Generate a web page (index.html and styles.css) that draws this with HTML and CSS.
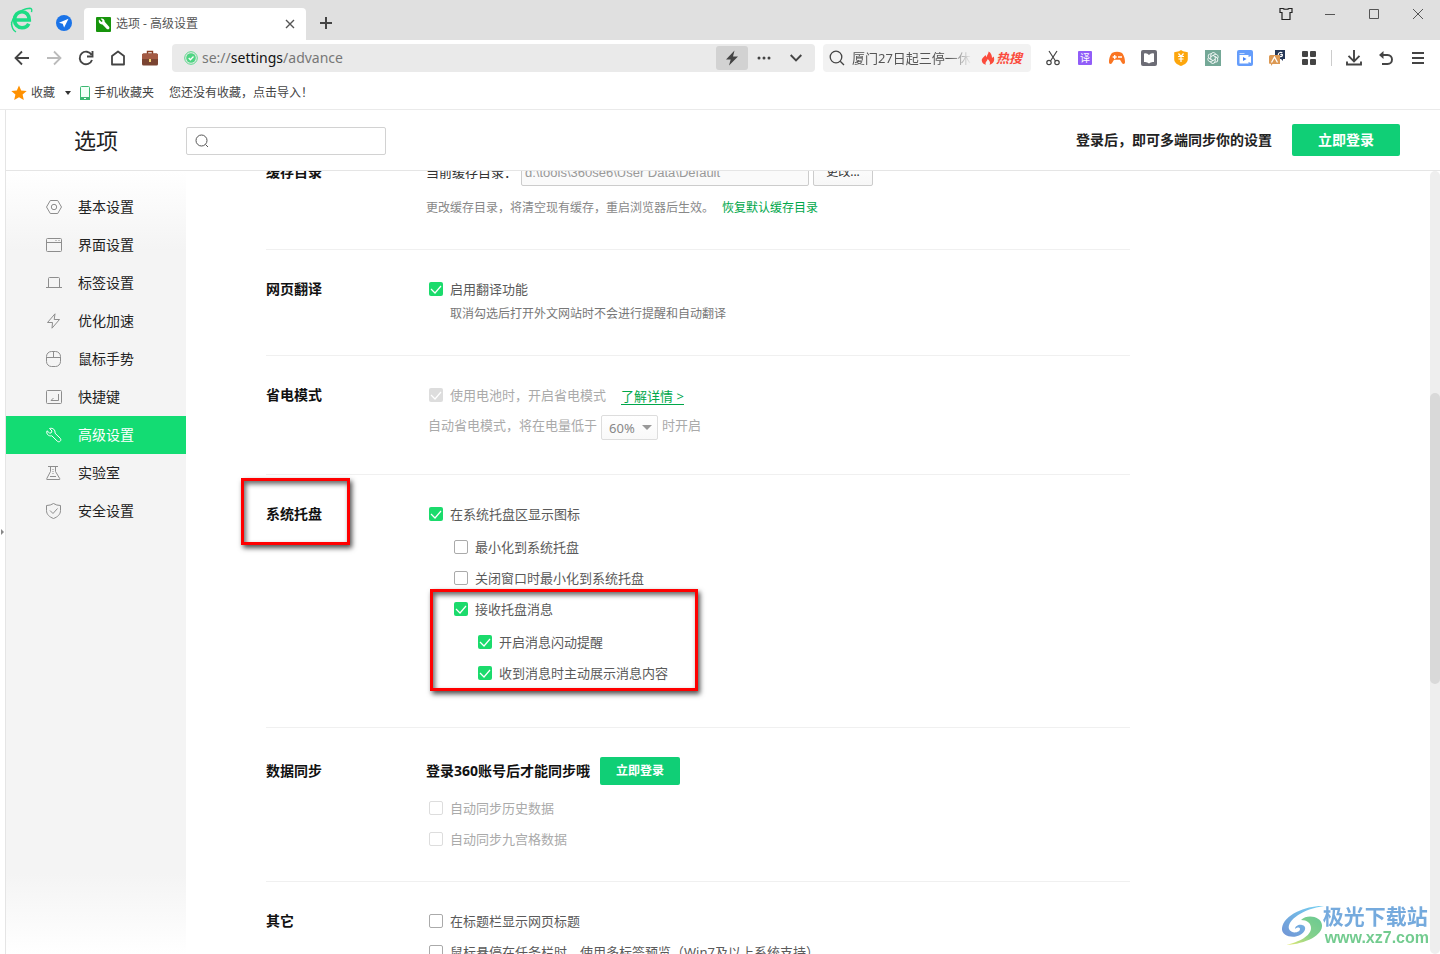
FILE: index.html
```html
<!DOCTYPE html>
<html lang="zh-CN">
<head>
<meta charset="utf-8">
<title>选项 - 高级设置</title>
<link rel="stylesheet" href="styles.css">
</head>
<body>
<div class="titlebar">
  <div class="brand">
    <svg width="24" height="26" viewBox="0 0 24 26" fill="none" stroke="#1ddc85"><path d="M5.500 13h13.800c0-5-3-8.300-7.300-8.300-4.300 0-7.500 3.500-7.500 8 0 4.700 3.300 8 7.500 8 3.200 0 5.500-1.300 6.700-4" stroke-width="3.600"/><path d="M1.500 18C2 9 10 2 20 1.200c2 0 2 2 1.500 4M1.500 15c0 4 1 8 4.500 10" stroke-width="1.400"/></svg>
  </div>
  <button class="pinned" aria-label="导航"><svg width="16" height="16" viewBox="0 0 16 16"><circle cx="8" cy="8" r="8" fill="#1a73e8"/><path d="M12.500 3.700 3 7.700l3.700 1.100 1.400 3.800z" fill="#fff"/></svg></button>
  <div class="tab">
    <svg width="15" height="15" viewBox="0 0 15 15"><rect width="15" height="15" rx="1" fill="#17940c"/><path d="M3 2.500 5.500 5 6.700 4 4.700 1.800c2-.8 4.200.6 4 3l4.400 4.900c1.200 1.700-.8 3.400-2.300 2.200L6.500 7.400C4.200 7.700 2 5.500 3 2.500z" fill="#fff"/></svg>
    <span class="tab-title">选项 - 高级设置</span>
    <button class="tab-close" aria-label="关闭标签"><svg width="10" height="10" viewBox="0 0 10 10" stroke="#555" stroke-width="1.400"><path d="m1 1 8 8M9 1 1 9"/></svg></button>
  </div>
  <button class="new-tab" aria-label="新标签"><svg width="12" height="12" viewBox="0 0 12 12" stroke="#444" stroke-width="2"><path d="M6 0v12M0 6h12"/></svg></button>
  <div class="window-controls">
    <button aria-label="皮肤"><svg width="14" height="14" viewBox="0 0 14 14" fill="none" stroke="#222" stroke-width="1.200"><path d="M1 1.500h3c1 1 5 1 6 0h3v4h-2v7H3v-7H1z"/></svg></button>
    <button aria-label="最小化"><svg width="10" height="10" viewBox="0 0 10 10" stroke="#555"><path d="M0 5.500h10"/></svg></button>
    <button aria-label="最大化"><svg width="10" height="10" viewBox="0 0 10 10" fill="none" stroke="#555"><path d="M.5.500h9v9h-9z"/></svg></button>
    <button aria-label="关闭"><svg width="10" height="10" viewBox="0 0 10 10" stroke="#555"><path d="m0 0 10 10M10 0 0 10"/></svg></button>
  </div>
</div>

<div class="toolbar">
  <div class="icon-row">
    <button aria-label="后退"><svg width="16" height="16" viewBox="0 0 16 16" fill="none" stroke="#444" stroke-width="1.800"><path d="M15 8H2M8 1.500 1.500 8 8 14.500"/></svg></button>
    <button aria-label="前进"><svg width="16" height="16" viewBox="0 0 16 16" fill="none" stroke="#bbb" stroke-width="1.800"><path d="M1 8h13M8 1.500 14.500 8 8 14.500"/></svg></button>
    <button aria-label="刷新"><svg width="16" height="16" viewBox="0 0 16 16" fill="none" stroke="#444" stroke-width="1.900"><path d="M13.500 4.800A6.300 6.300 0 1 0 14 10M14.500 1v5.500H9"/></svg></button>
    <button aria-label="主页"><svg width="16" height="16" viewBox="0 0 16 16" fill="none" stroke="#444" stroke-width="1.800" stroke-linejoin="round"><path d="M2 14.500V6l6-4.500L14 6v8.500z"/></svg></button>
    <button aria-label="工具箱"><svg width="16" height="16" viewBox="0 0 16 16"><path d="M5.500 4V1.500h5V4" fill="none" stroke="#8a3d22" stroke-width="1.400"/><rect y="3.500" width="16" height="12" rx="1.500" fill="#7a4432"/><path d="M0 5a1.500 1.500 0 0 1 1.500-1.500h13A1.500 1.500 0 0 1 16 5v4H0z" fill="#a35a44"/><rect x="7" y="9" width="2" height="3" fill="#f6d97a"/></svg></button>
  </div>
  <div class="address">
    <svg width="14" height="14" viewBox="0 0 14 14"><circle cx="7" cy="7" r="6.300" fill="none" stroke="#5bd98b"/><circle cx="7" cy="7" r="4.800" fill="#4fd583"/><path d="m4.700 7 1.700 1.700L9.500 5.500" fill="none" stroke="#fff" stroke-width="1.300"/></svg>
    <div class="url">se://<b>settings</b>/advance</div>
    <button class="boost" aria-label="极速模式"><svg width="14" height="16" viewBox="0 0 14 16" fill="#444"><path d="M9.500.500 1 9.500h4.700L4 15.500 13 6.500H8z"/></svg></button>
    <button class="addr-btn" aria-label="更多"><svg width="14" height="4" viewBox="0 0 14 4" fill="#444"><circle cx="2" cy="2" r="1.500"/><circle cx="7" cy="2" r="1.500"/><circle cx="12" cy="2" r="1.500"/></svg></button>
    <button class="addr-btn" aria-label="展开"><svg width="12" height="8" viewBox="0 0 12 8" fill="none" stroke="#444" stroke-width="1.900"><path d="m.7 1 5.300 5.300L11.300 1"/></svg></button>
  </div>
  <div class="quick-search">
    <svg width="16" height="16" viewBox="0 0 16 16" fill="none" stroke="#444" stroke-width="1.300"><circle cx="7" cy="7" r="5.800"/><path d="m11.200 11.200 3.800 3.800"/></svg>
    <span class="query">厦门27日起三停一休</span>
    <svg width="14" height="14" viewBox="0 0 14 14" fill="#fb4b3c"><path d="M7.500.500c.5 2-2 3.500-1.700 5.800L4.300 4C3.500 6 .5 7 .8 9.800c.2 2.200 2 3.600 4.300 3.900C3.500 11.500 6 10.500 6.800 8c1.500 1.700 3.200 3.500 1.700 5.700 4.200-.8 5.500-4.500 4.200-8.200L11 7C11 4.500 10 1.500 7.500.500z"/></svg>
    <em>热搜</em>
  </div>
  <div class="icon-row">
    <button aria-label="截图"><svg width="14" height="16" viewBox="0 0 14 16" fill="none" stroke="#444" stroke-width="1.200"><path d="m3 1 6.500 10M11 1 4.500 11"/><circle cx="3" cy="12.500" r="2.200"/><circle cx="11" cy="12.500" r="2.200"/></svg></button>
    <button aria-label="翻译"><span class="translate">译</span></button>
    <button aria-label="游戏"><svg width="16" height="16" viewBox="0 0 16 16"><path d="M4 2.500c2-.9 6-.9 8 0C14.500 3.500 16 8 16 12c0 2.500-2.200 2.500-3.200.8L11 9.800H5l-1.800 3C2.200 14.500 0 14.500 0 12c0-4 1.500-8.500 4-9.500z" fill="#fa7522"/><path d="M3.700 7h4M5.700 5v4" stroke="#fff" stroke-width="1.300"/><circle cx="10" cy="7" r="1" fill="#fff"/><circle cx="12" cy="7" r="1" fill="#fff"/></svg></button>
    <button aria-label="小说"><svg width="16" height="16" viewBox="0 0 16 16"><rect width="16" height="16" rx="2" fill="#6c6c75"/><path d="M3 3.500q3-1 5 1.500 2-2.500 5-1.500v8.500q-3-.5-5 1.500-2-2-5-1.500z" fill="#fff"/></svg></button>
    <button aria-label="优惠"><svg width="16" height="16" viewBox="0 0 16 16"><path d="m8 0 2 1.200 4.800 1V9c0 4-3.300 5.500-6.800 7-3.500-1.500-6.800-3-6.800-7V2.200l4.800-1z" fill="#fda60c"/><path d="m5.500 3.500 2.500 3 2.500-3M5 6.500h6M5.500 9h5M8 6.500V12" fill="none" stroke="#fff" stroke-width="1.200"/></svg></button>
    <button aria-label="智能助手"><svg width="16" height="16" viewBox="0 0 16 16"><rect width="16" height="16" fill="#74a897"/><g fill="none" stroke="#fff" stroke-width=".9"><path id="petal" d="M5.800 6.700 9.300 4.700c2.700-1.500 5 1.600 3.200 3.700"/><use href="#petal" transform="rotate(60 8 8)"/><use href="#petal" transform="rotate(120 8 8)"/><use href="#petal" transform="rotate(180 8 8)"/><use href="#petal" transform="rotate(240 8 8)"/><use href="#petal" transform="rotate(300 8 8)"/></g></svg></button>
    <button aria-label="录屏"><svg width="16" height="16" viewBox="0 0 16 16"><rect width="16" height="16" rx="2" fill="#659dfb"/><path d="M2.500 5h9v2l2.500-1v7l-2.500-1v1.500h-9z" fill="#fff"/><path d="m6 7 3.500 2L6 11z" fill="#4785f5"/><path d="M2.500 3.500h5" stroke="#c4dbff"/></svg></button>
    <button aria-label="字典"><svg width="16" height="16" viewBox="0 0 16 16"><path d="M6 0h10v9h-2v2l-2-2H6z" fill="#253858"/><path d="M13.300 3.200c-1-1.300-4-1-4 1.300s3 2.500 4 1.300V4.600h-2" fill="none" stroke="#fff" stroke-width="1.200"/><path d="M1.500 5H10q1 0 1 1v8H3.500L2 16v-2L0 13.500V6.500Q0 5 1.500 5z" fill="#dc9954"/><path d="m2.500 12.500 3-5.500 3 5.500" fill="none" stroke="#fff" stroke-width="1.300"/></svg></button>
    <button aria-label="扩展"><svg width="14" height="14" viewBox="0 0 14 14" fill="#444"><rect width="6" height="6" rx="1"/><rect x="8" width="6" height="6" rx="1"/><rect y="8" width="6" height="6" rx="1"/><rect x="8" y="8" width="6" height="6" rx="1"/></svg></button>
    <span class="divider"></span>
    <button aria-label="下载"><svg width="16" height="16" viewBox="0 0 16 16" fill="none" stroke="#444" stroke-width="1.900"><path d="M8 0v11M2.500 5.800 8 11.300l5.500-5.500M1 11.500V14.500h14v-3"/></svg></button>
    <button aria-label="恢复"><svg width="16" height="16" viewBox="0 0 16 16" fill="none" stroke="#444" stroke-width="1.900"><path d="M2 5h7.500c6 0 6 9 0 9H4"/><path d="M5.500 1v8L1 5z" fill="#444" stroke="none"/></svg></button>
    <button aria-label="菜单"><svg width="12" height="12" viewBox="0 0 12 12" stroke="#444" stroke-width="2"><path d="M0 1h12M0 6h12M0 11h12"/></svg></button>
  </div>
</div>

<div class="bookmarks">
  <button class="mark fav"><svg width="16" height="16" viewBox="0 0 16 16"><path d="m8 .5 2.200 5 5.500.5-4.100 3.600 1.200 5.400L8 12.200 3.200 15l1.200-5.400L.3 6l5.500-.5z" fill="#ff9100"/></svg>收藏<i class="caret"></i></button>
  <button class="mark phone"><svg width="10" height="14" viewBox="0 0 10 14"><rect x=".5" y=".5" width="9" height="13" rx="1" fill="#f2fff7" stroke="#3cb872"/><path d="M0 11h10v3H0z" fill="#3cb872"/><path d="M4 12.500h2" stroke="#fff"/></svg>手机收藏夹</button>
  <button class="mark import">您还没有收藏，点击导入！</button>
</div>

<div class="viewport">
  <div class="gutter"><i></i></div>
  <div class="page">
    <header class="page-head">
      <h1>选项</h1>
      <label class="search-box">
        <svg width="14" height="14" viewBox="0 0 14 14" fill="none" stroke="#555"><circle cx="6.500" cy="6.500" r="5.500"/><path d="m10.500 10.500 2.500 2.500"/></svg>
        <input type="text" aria-label="搜索设置">
      </label>
      <p>登录后，即可多端同步你的设置</p>
      <button class="login">立即登录</button>
    </header>
    <div class="page-body">
      <nav class="sidebar">
        <a href="#basic"><svg width="16" height="16" viewBox="0 0 16 16"><path d="M4.300 1.500h7.400L15.500 8l-3.800 6.500H4.300L.5 8z"/><circle cx="8" cy="8" r="2.700"/></svg>基本设置</a>
        <a href="#ui"><svg width="16" height="16" viewBox="0 0 16 16"><rect x=".5" y="1.500" width="15" height="13" rx="1"/><path d="M.5 5.500h15M9.500 3.500h1M12.500 3.500h1"/></svg>界面设置</a>
        <a href="#tabs"><svg width="16" height="16" viewBox="0 0 16 16"><path d="M2.500 12.500v-9q0-1 1-1h9q1 0 1 1v9M0 12.500h16"/></svg>标签设置</a>
        <a href="#speed"><svg width="16" height="16" viewBox="0 0 16 16"><path d="M9 .8 1.500 9.500h5L6 15.200 13.500 6.500H8.200z"/></svg>优化加速</a>
        <a href="#mouse"><svg width="16" height="16" viewBox="0 0 16 16"><rect x=".5" y=".5" width="14" height="15" rx="5"/><path d="M.5 6.500h14M7.500.500v6"/></svg>鼠标手势</a>
        <a href="#keys"><svg width="16" height="16" viewBox="0 0 16 16"><rect x=".5" y="1.500" width="15" height="13" rx="1"/><path d="M12.500 5v6.500H5l2.500-2.500"/></svg>快捷键</a>
        <a href="#advance" class="active"><svg width="16" height="16" viewBox="0 0 16 16"><path d="M3.500 1.500 6 4 5 6 3.500 6 1 3.800C0 7 2.500 9.500 5.800 8.800l5.500 5.400c2 1.800 4.700-.8 3-2.900L9 6.200C9.500 3 7 .5 3.500 1.500z"/></svg>高级设置</a>
        <a href="#lab"><svg width="16" height="16" viewBox="0 0 16 16"><path d="M2 1.500h10M4.500 1.500v5L.8 13.500v1h12.900v-1L9.500 6.500v-5M4 11.500h6"/><path d="M7 4v6" stroke-dasharray="1 1"/></svg>实验室</a>
        <a href="#safe"><svg width="16" height="16" viewBox="0 0 16 16"><path d="M7.500.500q3 2 7 2v5c0 4-3 6.500-7 8-4-1.500-7-4-7-8v-5q4 0 7-2zM4 7.500l3 3 4.500-5"/></svg>安全设置</a>
      </nav>
      <main class="settings">
        <section class="group">
          <h2>缓存目录</h2>
          <div class="fields">
            <div class="line cache">
              <label for="cache">当前缓存目录：</label>
              <input id="cache" type="text" value="d:\tools\360se6\User Data\Default" disabled>
              <button>更改...</button>
            </div>
            <p class="cache-hint">更改缓存目录，将清空现有缓存，重启浏览器后生效。<a href="#reset">恢复默认缓存目录</a></p>
          </div>
        </section>
        <section class="group">
          <h2>网页翻译</h2>
          <div class="fields">
            <label class="option"><input type="checkbox" checked>启用翻译功能</label>
            <p class="hint">取消勾选后打开外文网站时不会进行提醒和自动翻译</p>
          </div>
        </section>
        <section class="group">
          <h2>省电模式</h2>
          <div class="fields">
            <div class="line"><label class="option off"><input type="checkbox" checked disabled>使用电池时，开启省电模式</label><a class="more" href="#power">了解详情 &gt;</a></div>
            <div class="line battery"><label for="level">自动省电模式，将在电量低于</label><span class="select"><select id="level" disabled><option>60%</option></select></span>时开启</div>
          </div>
        </section>
        <section class="group tray">
          <h2><span class="marked">系统托盘</span></h2>
          <div class="fields">
            <label class="option"><input type="checkbox" checked>在系统托盘区显示图标</label>
            <div class="nested">
              <label class="option"><input type="checkbox">最小化到系统托盘</label>
              <label class="option"><input type="checkbox">关闭窗口时最小化到系统托盘</label>
              <div class="messages">
                <label class="option"><input type="checkbox" checked>接收托盘消息</label>
                <div class="nested">
                  <label class="option"><input type="checkbox" checked>开启消息闪动提醒</label>
                  <label class="option"><input type="checkbox" checked>收到消息时主动展示消息内容</label>
                </div>
              </div>
            </div>
          </div>
        </section>
        <section class="group data">
          <h2>数据同步</h2>
          <div class="fields">
            <div class="line sync"><strong>登录360账号后才能同步哦</strong><button class="login small">立即登录</button></div>
            <label class="option off"><input type="checkbox" disabled>自动同步历史数据</label>
            <label class="option off"><input type="checkbox" disabled>自动同步九宫格数据</label>
          </div>
        </section>
        <section class="group">
          <h2>其它</h2>
          <div class="fields">
            <label class="option"><input type="checkbox">在标题栏显示网页标题</label>
            <label class="option"><input type="checkbox">鼠标悬停在任务栏时，使用多标签预览（Win7及以上系统支持）</label>
          </div>
        </section>
      </main>
      <div class="scrollbar"><i></i></div>
    </div>
  </div>
</div>

<div class="watermark">
  <svg width="44" height="42" viewBox="0 0 44 42">
    <defs>
      <linearGradient id="sky" x1="0" y1="1" x2="1" y2="0"><stop offset="0" stop-color="#6a8ed2"/><stop offset="1" stop-color="#6fd0f2"/></linearGradient>
      <linearGradient id="leaf" x1="0" y1="1" x2="1" y2="0"><stop offset="0" stop-color="#e6e96a"/><stop offset=".5" stop-color="#7fcf86"/><stop offset="1" stop-color="#62c78e"/></linearGradient>
    </defs>
    <path d="M43 1C27 0 3 9 1 23c-1 8 11 11 18 7 6-3 7-9 2-10-3-1-7 1-7 4 2-2 5-2 5 0 0 4-9 5-11 0C6 15 22 4 43 1z" fill="url(#sky)"/>
    <path d="M20 15c6-6 20-4 21 5 1 10-16 19-36 20 13-3 25-9 25-17 0-5-4-8-10-8z" fill="url(#leaf)"/>
  </svg>
  <div><b>极光下载站</b><span>www.xz7.com</span></div>
</div>
</body>
</html>
```
FILE: styles.css
```css
*, *::before, *::after { box-sizing: border-box; }
body {
  margin: 0;
  height: 100vh;
  display: flex;
  flex-direction: column;
  overflow: hidden;
  background: #fff;
  color: #444;
  font: 12px/20px "Noto Sans", "Noto Sans CJK SC", sans-serif;
}
button, input, select { font: inherit; color: inherit; }
button { border: 0; padding: 0; background: none; display: flex; align-items: center; justify-content: center; }
h1, h2, p { margin: 0; }
a { text-decoration: none; color: #00a74a; }
svg { display: block; flex: none; }

/* Title bar */
.titlebar { height: 40px; flex: none; display: flex; background: #e0e0e0; }
.brand { width: 44px; display: flex; align-items: center; justify-content: center; }
.pinned { width: 40px; padding-top: 6px; }
.tab { width: 222px; margin-top: 8px; padding: 0 10px 0 12px; display: flex; align-items: center; gap: 5px; background: #fff; border-radius: 4px 4px 0 0; }
.tab-title { flex: 1; color: #555; }
.tab-close { width: 12px; height: 20px; }
.new-tab { width: 40px; padding-top: 6px; }
.window-controls { margin-left: auto; height: 28px; display: flex; }
.window-controls button { width: 44px; }

/* Toolbar */
.toolbar { height: 36px; flex: none; display: flex; align-items: center; gap: 6px; padding: 0 6px; }
.icon-row { display: flex; align-items: center; }
.icon-row button { width: 32px; height: 28px; }
.divider { width: 1px; height: 16px; margin: 0 6px; background: #ccc; }
.translate { width: 14px; height: 14px; border-radius: 1px; background: #915df8; color: #fff; font-size: 10px; line-height: 14px; }
.address { flex: 1; height: 28px; display: flex; align-items: center; padding: 0 3px 0 12px; background: #eaeaea; border-radius: 4px; }
.url { flex: 1; padding-left: 4px; font-size: 14px; color: #777; }
.url b { font-weight: 400; color: #111; }
.boost { width: 32px; height: 24px; border-radius: 3px; background: #d2d2d2; }
.addr-btn { width: 32px; height: 24px; }
.quick-search { width: 208px; height: 28px; margin-left: 2px; padding: 0 9px 0 6px; display: flex; align-items: center; gap: 1px; background: #f2f2f2; border-radius: 4px; }
.query { flex: 1; margin: 0 8px 0 6px; overflow: hidden; white-space: nowrap; font-size: 13px; color: #555; -webkit-mask-image: linear-gradient(90deg, #000 80%, transparent); mask-image: linear-gradient(90deg, #000 80%, transparent); }
.quick-search em { color: #fb4b3c; font-size: 13px; font-weight: 700; }

/* Bookmarks */
.bookmarks { height: 34px; flex: none; display: flex; align-items: center; padding-left: 11px; border-bottom: 1px solid #eaeaea; }
.mark { gap: 4px; }
.caret { margin-left: 6px; border: 3px solid transparent; border-top: 4px solid #333; border-bottom: 0; }
.phone { margin-left: 9px; }
.import { margin-left: 15px; }

/* Page shell */
.viewport { flex: 1; min-height: 0; display: flex; }
.gutter { width: 5px; display: flex; align-items: center; justify-content: center; }
.gutter i { border: 3px solid transparent; border-left: 3px solid #888; border-right: 0; }
.page { flex: 1; min-width: 0; display: flex; flex-direction: column; border-left: 1px solid #e5e5e5; }
.page-head { height: 61px; flex: none; display: flex; align-items: center; padding: 0 40px 0 68px; border-bottom: 1px solid #e5e5e5; color: #222; }
h1 { width: 112px; font-size: 22px; line-height: 30px; font-weight: 400; }
.search-box { width: 200px; height: 28px; margin-top: 2px; padding: 0 8px; display: flex; align-items: center; border: 1px solid #d2d2d2; border-radius: 2px; }
.search-box input { flex: 1; min-width: 0; border: 0; outline: 0; background: none; }
.page-head p { margin-left: auto; font-size: 14px; font-weight: 700; }
.login { width: 108px; height: 32px; margin-left: 20px; border-radius: 2px; background: #10cf76; color: #fff; font-size: 14px; font-weight: 700; }
.login.small { width: 80px; height: 28px; margin-left: 10px; font-size: 12px; }
.page-body { flex: 1; min-height: 0; display: flex; overflow: hidden; }

/* Sidebar */
.sidebar { width: 180px; flex: none; padding-top: 17px; background: linear-gradient(#fff, #f4f4f4 80px, #f4f4f4 calc(100% - 80px), #fff); }
.sidebar a { height: 38px; display: flex; align-items: center; gap: 16px; padding-left: 40px; color: #222; font-size: 14px; }
.sidebar svg { fill: none; stroke: #8d8d8d; }
.sidebar .active { background: #13dc73; color: #fff; }
.sidebar .active svg { stroke: #fff; }

/* Settings */
.settings { flex: 1; min-width: 0; margin-top: -13px; padding: 0 300px 0 80px; }
.group { display: flex; padding: 29px 0 31px; border-bottom: 1px solid #f0f0f0; }
.group:first-child { padding-top: 0; }
.group:first-child h2, .data h2 { line-height: 28px; }
.group:last-child { border: 0; }
h2 { width: 160px; flex: none; font-size: 14px; line-height: 20px; color: #111; }
.fields { flex: 1; min-width: 0; font-size: 13px; color: #5a5a5a; }
.line { display: flex; align-items: center; }
.cache { height: 28px; color: #333; gap: 4px; }
.cache label { width: 91px; white-space: nowrap; }
.cache input { width: 288px; height: 28px; padding: 0 3px; border: 1px solid #ccc; border-radius: 2px; background: #fafafa; color: #999; font: 13px/20px "Liberation Sans", sans-serif; }
.cache button { width: 60px; height: 28px; border: 1px solid #ccc; border-radius: 2px; background: linear-gradient(#fff, #f7f7f7); font-size: 12px; }
.cache-hint { margin-top: 12px; font-size: 12px; color: #888; }
.cache-hint a { margin-left: 8px; }
.hint { margin-top: 5px; padding-left: 24px; font-size: 12px; color: #777; }
.option { display: flex; align-items: center; gap: 7px; padding-left: 3px; line-height: 20px; white-space: nowrap; }
.option + .option { margin-top: 11px; }
.option input {
  appearance: none; flex: none; width: 14px; height: 14px; margin: 0;
  border: 1px solid #aaa; border-radius: 2px; background: #fff;
}
.option input:checked {
  border: 0;
  background: #1bdb6c url("data:image/svg+xml,%3Csvg xmlns='http://www.w3.org/2000/svg' viewBox='0 0 14 14'%3E%3Cpath d='M2 7l4 4 6-7' fill='none' stroke='white' stroke-width='1.2'/%3E%3C/svg%3E");
}
.off, .battery { color: #aaa; }
.off input { border-color: #ddd; }
.option.off input:checked { background-color: #ddd; }
.more { margin-left: 15px; padding-top: 2px; border-bottom: 1px solid #00a74a; line-height: 16px; }
.battery { height: 31px; margin-top: 7px; padding: 3px 0 0 2px; gap: 4px; align-items: flex-start; }
.select { position: relative; }
.select select { appearance: none; display: block; width: 57px; height: 25px; padding: 0 7px; border: 1px solid #ddd; border-radius: 2px; background: linear-gradient(#fff, #f9f9f9); color: #888; opacity: 1; }
.select::after { content: ""; position: absolute; right: 6px; top: 10px; border: 5px solid transparent; border-top-color: #999; border-bottom: 0; }
.tray { padding-bottom: 44px; }
.data { padding-bottom: 32px; }
.nested { margin-top: 13px; padding-left: 25px; }
.nested .nested { padding-left: 24px; }
.messages { position: relative; margin-top: 11px; }
.marked { position: relative; }
.marked::after, .messages::after {
  content: ""; position: absolute; pointer-events: none;
  border: 3px solid #f00;
  box-shadow: 2px 3px 5px rgba(0, 0, 0, .7), inset 2px 3px 5px rgba(0, 0, 0, .6);
}
.marked::after { left: -25px; top: -26px; width: 109px; height: 67px; }
.messages::after { left: -21px; top: -10px; width: 268px; height: 102px; }
.sync { margin-bottom: 13px; }
.sync strong { font-size: 14px; color: #111; }

/* Scroll bar */
.scrollbar { width: 10px; flex: none; display: grid; grid-template-rows: 222fr 291fr 270fr; background: #eee; border-radius: 5px; }
.scrollbar i { grid-row: 2; background: #d9d9d9; border-radius: 5px; }

/* Watermark */
.watermark { position: fixed; right: 11px; bottom: 6px; display: flex; align-items: center; opacity: .95; }
.watermark svg { margin-right: -2px; }
.watermark b, .watermark span { display: block; white-space: nowrap; }
.watermark b { font-size: 21px; line-height: 24px; color: #6ea6dc; }
.watermark span { font: 700 16px/20px "Liberation Sans", sans-serif; color: #6cc98a; padding-left: 2px; }
```
